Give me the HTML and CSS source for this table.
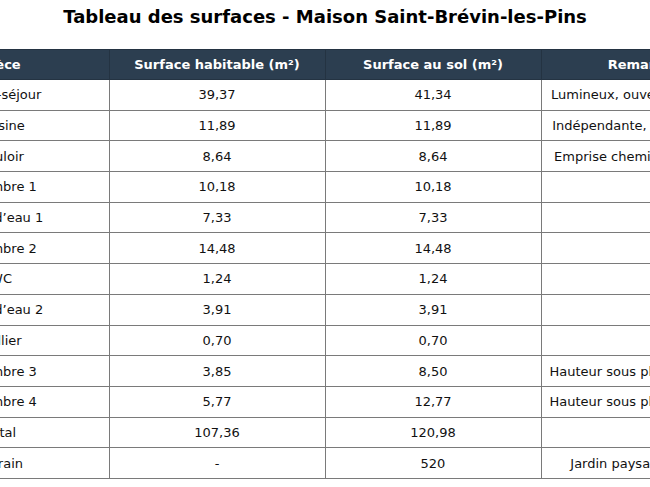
FILE: index.html
```html
<!DOCTYPE html>
<html lang="fr">
<head>
<meta charset="utf-8">
<title>Tableau des surfaces</title>
<link rel="stylesheet" href="styles.css">
</head>
<body>
<div class="page">
  <h1 class="title">Tableau des surfaces - Maison Saint-Brévin-les-Pins</h1>
  <div class="table-wrap">
    <table class="surfaces">
      <thead>
        <tr><th>Pièce</th><th>Surface habitable (m²)</th><th>Surface au sol (m²)</th><th>Remarques</th></tr>
      </thead>
      <tbody>
        <tr><td>Salon-séjour</td><td>39,37</td><td>41,34</td><td>Lumineux, ouvert sur terrasse</td></tr>
        <tr><td>Cuisine</td><td>11,89</td><td>11,89</td><td>Indépendante, avec un cellier</td></tr>
        <tr><td>Couloir</td><td>8,64</td><td>8,64</td><td>Emprise cheminée soustraite</td></tr>
        <tr><td>Chambre 1</td><td>10,18</td><td>10,18</td><td></td></tr>
        <tr><td>Salle d’eau 1</td><td>7,33</td><td>7,33</td><td></td></tr>
        <tr><td>Chambre 2</td><td>14,48</td><td>14,48</td><td></td></tr>
        <tr><td>WC</td><td>1,24</td><td>1,24</td><td></td></tr>
        <tr><td>Salle d’eau 2</td><td>3,91</td><td>3,91</td><td></td></tr>
        <tr><td>Cellier</td><td>0,70</td><td>0,70</td><td></td></tr>
        <tr><td>Chambre 3</td><td>3,85</td><td>8,50</td><td>Hauteur sous plafond &lt; 1,80 m</td></tr>
        <tr><td>Chambre 4</td><td>5,77</td><td>12,77</td><td>Hauteur sous plafond &lt; 1,80 m</td></tr>
        <tr><td>Total</td><td>107,36</td><td>120,98</td><td></td></tr>
        <tr><td>Terrain</td><td>-</td><td>520</td><td>Jardin paysagé, terrasse</td></tr>
      </tbody>
    </table>
  </div>
</div>
</body>
</html>
```
FILE: styles.css
```css
html, body {
  margin: 0;
  padding: 0;
  background: #ffffff;
  overflow: hidden;
}
.page {
  width: 650px;
  font-family: "DejaVu Sans", sans-serif;
  color: #111;
}
.title {
  margin: 0;
  padding-top: 6px;
  height: 49px;
  box-sizing: border-box;
  font-size: 18px;
  line-height: 22px;
  font-weight: bold;
  text-align: center;
  color: #000;
}
.table-wrap {
  display: flex;
  justify-content: center;
  width: 650px;
}
.surfaces {
  flex: none;
  width: 865px;
  border-collapse: collapse;
  table-layout: fixed;
  font-size: 13px;
}
.surfaces th {
  background: #2c3e50;
  color: #fff;
  font-weight: bold;
  height: 30px;
  padding: 0 8px;
  border: 1px solid #243342;
  text-align: center;
  box-sizing: border-box;
}
.surfaces td {
  height: 30.7px;
  padding: 0 8px;
  border: 1px solid #7a7a7a;
  text-align: center;
  white-space: nowrap;
  box-sizing: border-box;
}
```
